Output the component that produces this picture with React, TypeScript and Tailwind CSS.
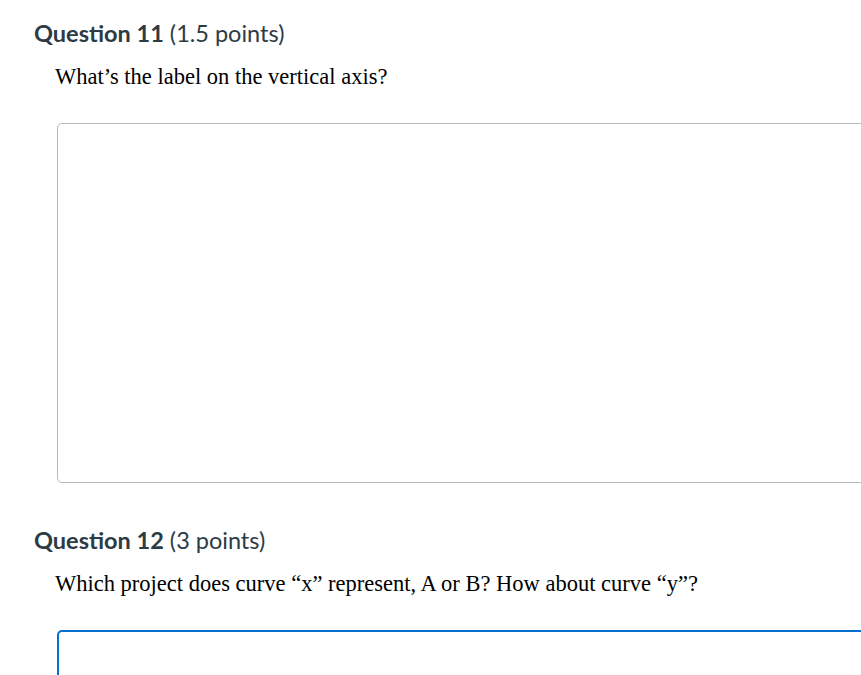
const Question = ({num, points, text, active}: {num: number; points: string; text: string; active?: boolean}) => {
    return (
        <div>
            <h2 className="pl-[34px] text-[23.5px] leading-[28px] text-[#2d3b45]" style={{fontFamily: "Lato, sans-serif"}}>
                <span className="font-bold">Question {num}</span> ({points})
            </h2>
            <p className="pl-[55px] mt-[16px] text-[22.5px] leading-[28px] text-black" style={{fontFamily: '"Liberation Serif", serif'}}>
                {text}
            </p>
            <div
                className={
                    active
                        ? "ml-[57px] mt-[32px] w-[900px] h-[360px] rounded-[5px] border-2 border-[#0770cf] bg-white"
                        : "ml-[57px] mt-[32px] w-[900px] h-[360px] rounded-[5px] border border-[#b3b9bd] bg-white"
                }
            />
        </div>
    );
};

export default function App() {
    return (
        <div className="w-[861px] h-[675px] overflow-hidden bg-white pt-[19px]">
            <Question num={11} points="1.5 points" text="What’s the label on the vertical axis?"/>
            <div className="mt-[43px]">
                <Question num={12} points="3 points" text="Which project does curve “x” represent, A or B? How about curve “y”?" active/>
            </div>
        </div>
    );
}
